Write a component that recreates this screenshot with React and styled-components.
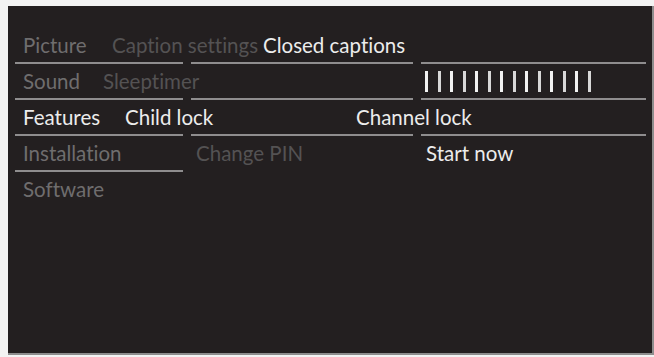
import React from "react";
import styled, { createGlobalStyle } from "styled-components";

const GlobalStyle = createGlobalStyle`
  html, body {
    margin: 0;
    padding: 0;
    background: #f3f3f3;
  }
  body {
    width: 654px;
    height: 357px;
    overflow: hidden;
    font-family: "Lato", "Open Sans", sans-serif;
  }
`;

const Screen = styled.div`
  box-sizing: border-box;
  margin: 6px 0 0 8px;
  width: 646px;
  height: 349px;
  background: #231f20;
  border-right: 2px solid #8d8d8d;
  border-bottom: 2px solid #8d8d8d;
  padding: 22px 8px 0 7px;
`;

const Row = styled.div`
  display: flex;
  flex-direction: column;
`;

const Labels = styled.div`
  display: grid;
  height: 34px;
  align-items: center;
`;

const Label = styled.span`
  grid-area: 1 / 1;
  margin-left: ${(p) => p.$x}px;
  font-size: 20.5px;
  line-height: 1;
  white-space: nowrap;
  font-variant-ligatures: none;
  color: ${(p) =>
    p.$tone === "on" ? "#ececec" : p.$tone === "dim" ? "#545253" : "#6f6d6e"};
`;

const Rules = styled.div`
  display: grid;
  grid-template-columns: 168px 222px 225px;
  column-gap: 8px;
  height: 2px;
`;

const Rule = styled.div`
  height: 2px;
  background: ${(p) => (p.$on ? "#8f8d8e" : "transparent")};
`;

const Bars = styled.div`
  grid-area: 1 / 1;
  margin-left: ${(p) => p.$x}px;
  display: flex;
  gap: 9.5px;
  height: 21px;
`;

const Bar = styled.div`
  width: 3px;
  height: 100%;
  background: ${(p) => (p.$bright ? "#f2f2f2" : "#d8d8d8")};
`;

// x offsets are measured from the left edge of the rules
const rows = [
  {
    rules: [1, 1, 1],
    labels: [
      { text: "Picture", x: 8, tone: "mid" },
      { text: "Caption settings", x: 97, tone: "dim" },
      { text: "Closed captions", x: 248, tone: "on" },
    ],
  },
  {
    rules: [1, 1, 1],
    labels: [
      { text: "Sound", x: 8, tone: "mid" },
      { text: "Sleeptimer", x: 88, tone: "dim" },
    ],
    bars: 410,
  },
  {
    rules: [1, 1, 1],
    labels: [
      { text: "Features", x: 8, tone: "on" },
      { text: "Child lock", x: 110, tone: "on" },
      { text: "Channel lock", x: 341, tone: "on" },
    ],
  },
  {
    rules: [1, 0, 0],
    labels: [
      { text: "Installation", x: 8, tone: "mid" },
      { text: "Change PIN", x: 181, tone: "dim" },
      { text: "Start now", x: 411, tone: "on" },
    ],
  },
  {
    rules: [0, 0, 0],
    labels: [{ text: "Software", x: 8, tone: "mid" }],
  },
];

const App = () => {
  return (
    <>
      <GlobalStyle />
      <Screen>
        {rows.map((row, i) => (
          <Row key={i}>
            <Labels>
              {row.labels.map((l) => (
                <Label key={l.text} $x={l.x} $tone={l.tone}>
                  {l.text}
                </Label>
              ))}
              {row.bars && (
                <Bars $x={row.bars}>
                  {Array.from({ length: 14 }).map((_, b) => (
                    <Bar key={b} $bright={b % 2 === 0} />
                  ))}
                </Bars>
              )}
            </Labels>
            <Rules>
              {row.rules.map((on, r) => (
                <Rule key={r} $on={on} />
              ))}
            </Rules>
          </Row>
        ))}
      </Screen>
    </>
  );
};

export default App;
